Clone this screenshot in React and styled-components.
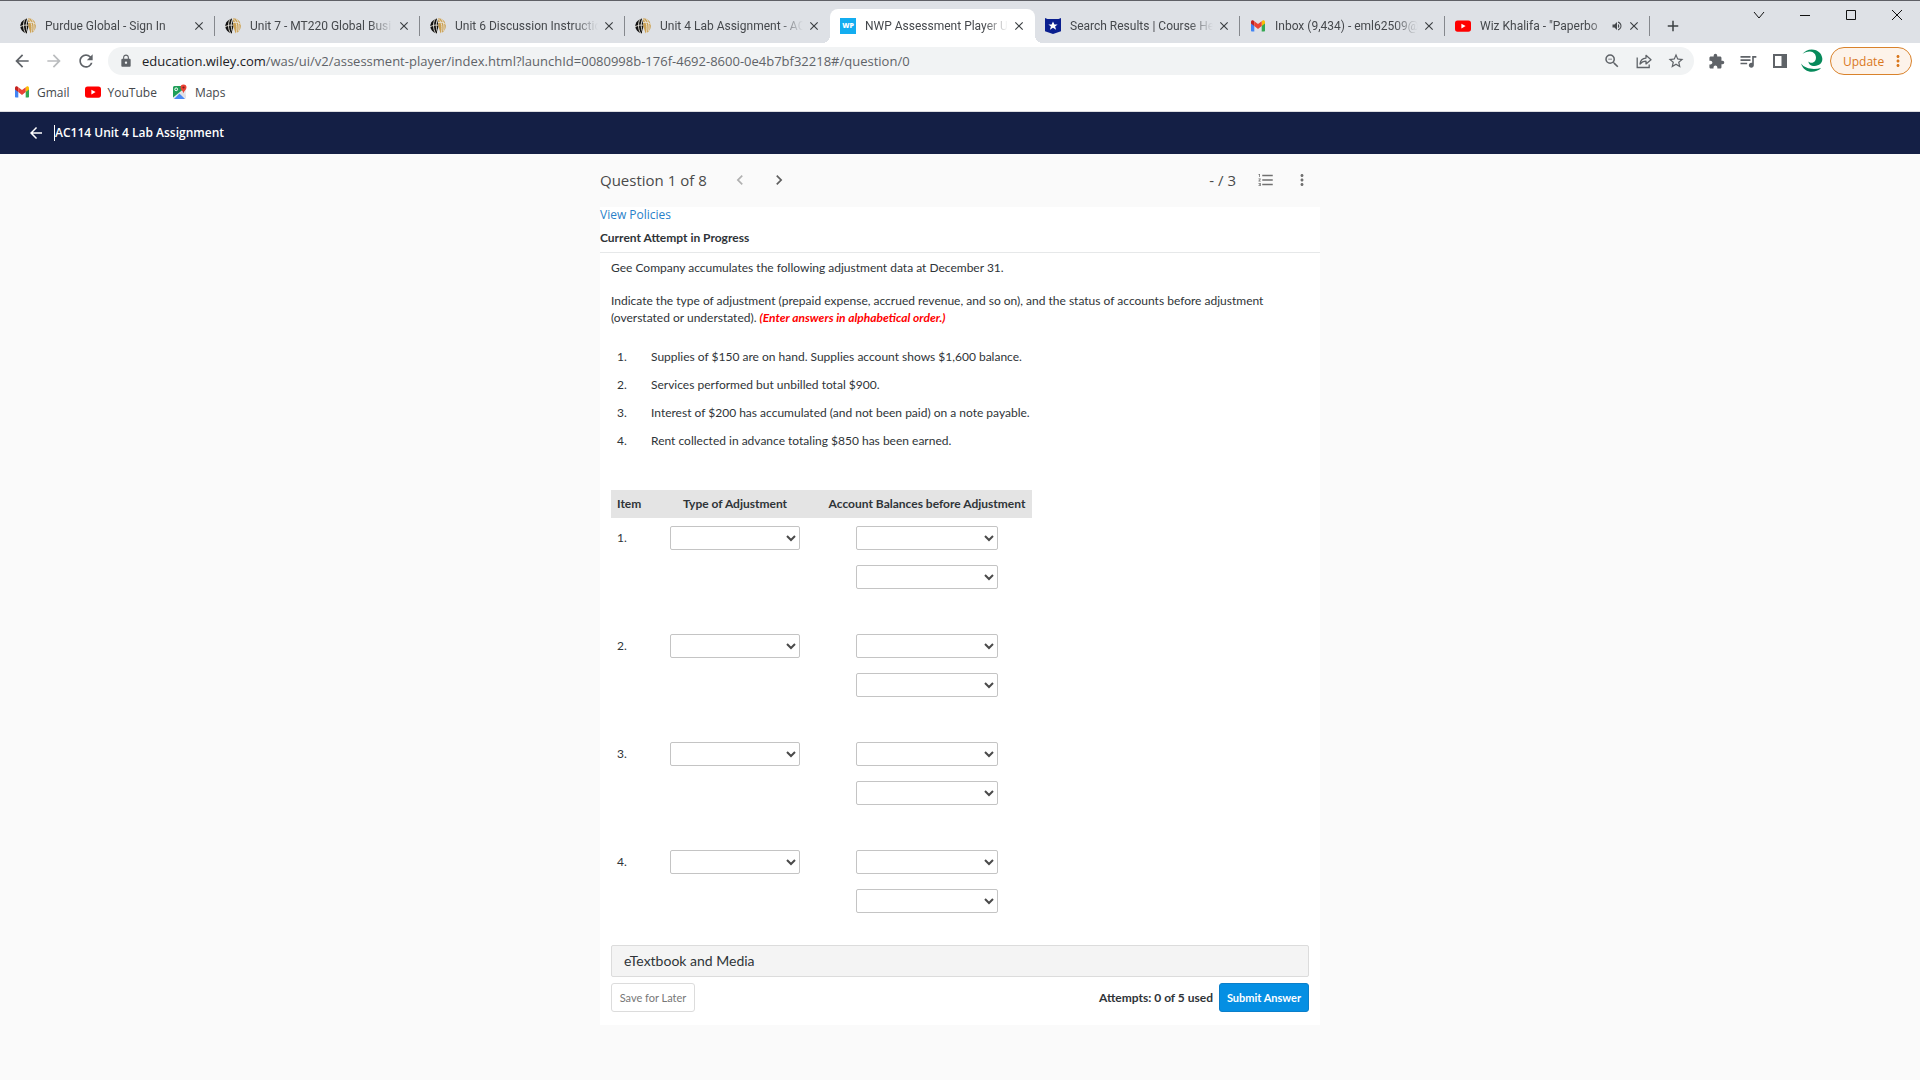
import React from 'react'
import styled, { createGlobalStyle } from 'styled-components'
import {
  MdAdd,
  MdArrowBack,
  MdArrowForward,
  MdChevronLeft,
  MdChevronRight,
  MdClose,
  MdExtension,
  MdFormatListNumbered,
  MdLock,
  MdMoreVert,
  MdQueueMusic,
  MdRefresh,
  MdStarBorder,
  MdVolumeUp,
  MdZoomOut,
} from 'react-icons/md'

const tabs = [
  { title: 'Purdue Global - Sign In', icon: 'globe' },
  { title: 'Unit 7 - MT220 Global Busi', icon: 'globe' },
  { title: 'Unit 6 Discussion Instructio', icon: 'globe' },
  { title: 'Unit 4 Lab Assignment - AC', icon: 'globe', noLine: true },
  { title: 'NWP Assessment Player UI', icon: 'wiley', active: true, noLine: true },
  { title: 'Search Results | Course He', icon: 'shield' },
  { title: 'Inbox (9,434) - eml62509@', icon: 'gmail' },
  { title: 'Wiz Khalifa - "Paperbo', icon: 'youtube', audio: true },
]

const facts = [
  'Supplies of $150 are on hand. Supplies account shows $1,600 balance.',
  'Services performed but unbilled total $900.',
  'Interest of $200 has accumulated (and not been paid) on a note payable.',
  'Rent collected in advance totaling $850 has been earned.',
]

const GlobeIcon = () => (
  <svg width="16" height="16" viewBox="0 0 16 16">
    <path d="M7 0.6C3.2 1.6 0.4 4.6 0.3 8c0 3.4 2.6 6.5 6.5 7.6L8.5 8z" fill="#111" />
    <path d="M8 0.3C12.4 0.2 15.8 3.6 15.8 8c0 3.4-2.2 6.3-5.3 7.3L8.3 8z" fill="#cba052" />
    <path
      d="M5.2 1C2.8 4.8 3 11 5.6 15.2M8 0C5.4 5 5.8 11.5 8.6 16M0 8.8c3-1.6 5.4-2 8-1.6M8 4.6c3-.8 5.5-.2 8 1.7M8.5 1c3.6 3.4 4 9.2 2.8 14M11.5 1c2.6 3.8 3 8 2.2 12"
      fill="none"
      stroke="#e9e5dc"
      strokeWidth="0.9"
    />
  </svg>
)

const GmailIcon = () => (
  <svg width="16" height="16" viewBox="0 0 16 16">
    <path d="M1 4v8.5c0 .6.5 1 1 1h2.3V7.2z" fill="#4285f4" />
    <path d="M15 4v8.5c0 .6-.5 1-1 1h-2.3V7.2z" fill="#34a853" />
    <path d="M1 5.6V4c0-1.4 1.5-2.1 2.6-1.3l.7.5v4.9z" fill="#c5221f" />
    <path d="M15 5.6V4c0-1.4-1.5-2.1-2.6-1.3l-.7.5v4.9z" fill="#fbbc04" />
    <path d="M4.3 3.2L8 6l3.7-2.8v4.9L8 10.9 4.3 8.1z" fill="#ea4335" />
  </svg>
)

const YoutubeIcon = () => (
  <svg width="16" height="16" viewBox="0 0 16 16">
    <rect y="2.5" width="16" height="11.2" rx="2.6" fill="#f00" />
    <path d="M6.4 5.7v4.8l4.2-2.4z" fill="#fff" />
  </svg>
)

const MapsIcon = () => (
  <svg width="16" height="16" viewBox="0 0 16 16">
    <rect x="1" y="2" width="13" height="13" rx="1.5" fill="#e8eaed" />
    <path d="M1 13.5V3.5A1.5 1.5 0 0 1 2.5 2H11v3.5z" fill="#1e9e58" />
    <path d="M2 15l5.5-5.5L13 15z" fill="#4a89f3" />
    <path d="M7.5 9.5L10 7l4 4.5V14z" fill="#dfe1e5" />
    <circle cx="4.2" cy="5.3" r="1.4" fill="none" stroke="#fff" />
    <path d="M11.5 0.5A3 3 0 0 0 8.5 3.5c0 2.3 2.4 3.2 3 5.7.6-2.5 3-3.4 3-5.7A3 3 0 0 0 11.5 0.5z" fill="#ea4335" />
    <circle cx="11.5" cy="3.5" r="1.1" fill="#7b231e" />
  </svg>
)

const ShieldIcon = () => (
  <svg width="16" height="16" viewBox="0 0 16 16">
    <path d="M0 0l2.5 1h11L16 0v13.2L8 16l-8-2.8z" fill="#0a1f8f" />
    <path d="M8 3.4l1.4 3h3.2L10.1 8.5l1 3.2L8 9.8l-3.1 1.9 1-3.2L3.4 6.4h3.2z" fill="#fff" />
  </svg>
)

const ShareIcon = () => (
  <svg width="16" height="16" viewBox="0 0 16 16" fill="none" stroke="#5f6368" strokeWidth="1.3">
    <path d="M1.2 4.5v10h12v-3" />
    <path d="M4 11c.4-3.8 2.6-5.7 6-5.9V2.3L15 6.7l-5 4.2V8.2C7.4 8.2 5.6 9 4 11z" strokeLinejoin="round" />
  </svg>
)

const PanelIcon = () => (
  <svg width="14" height="14" viewBox="0 0 14 14">
    <path d="M0 0h14v14H0zM2 2v10h6.5V2z" fill="#5f6368" fillRule="evenodd" />
  </svg>
)

const AvatarIcon = () => (
  <svg width="24" height="24" viewBox="0 0 24 24" fill="#078a5b">
    <path d="M2.500 5C6-.3 15-1.500 20 4c5 6.500 1.500 13-5.500 13-4 0-6-2-6-4.500 1.500 1.800 5 1.800 6.500-.5C17.500 8 15 2.700 10 2.500 7 2.400 4.500 3.300 2.500 5z" />
    <path d="M1 14.500c4 5.300 12 6.500 20.200 4.500-6 5.700-17 5.700-20.200-4.500z" />
  </svg>
)

const WindowIcon = ({ d }) => (
  <svg width="12" height="12" viewBox="0 0 12 12" fill="none" stroke="#111">
    <path d={d} />
  </svg>
)

const favicons = {
  globe: <GlobeIcon />,
  shield: <ShieldIcon />,
  gmail: <GmailIcon />,
  youtube: <YoutubeIcon />,
}

const windowButtons = [
  { label: 'Search tabs', d: 'M1 3l5 6 5-6' },
  { label: 'Minimize', d: 'M1 6.5h10' },
  { label: 'Maximize', d: 'M1.5 1.5h9v9h-9z' },
  { label: 'Close window', d: 'M1 1l10 10M11 1L1 11' },
]

const TabStrip = () => (
  <Strip>
    <Tabs>
      {tabs.map((tab) => (
        <Tab key={tab.title} $active={tab.active} $noLine={tab.noLine}>
          {tab.icon === 'wiley' ? <WileyMark>WP</WileyMark> : favicons[tab.icon]}
          <TabTitle>{tab.title}</TabTitle>
          {tab.audio && <MdVolumeUp size={12} />}
          <TabClose aria-label={`Close ${tab.title}`}>
            <MdClose size={14} />
          </TabClose>
        </Tab>
      ))}
      <NewTab aria-label="New tab">
        <MdAdd size={18} />
      </NewTab>
    </Tabs>
    <WindowControls>
      {windowButtons.map((b) => (
        <WindowButton key={b.label} aria-label={b.label}>
          <WindowIcon d={b.d} />
        </WindowButton>
      ))}
    </WindowControls>
  </Strip>
)

const Toolbar = () => (
  <Bar>
    <IconButton aria-label="Back"><MdArrowBack size={20} /></IconButton>
    <IconButton aria-label="Forward" $dim><MdArrowForward size={20} /></IconButton>
    <IconButton aria-label="Reload"><MdRefresh size={20} /></IconButton>
    <Omnibox>
      <MdLock size={14} />
      <Url>
        <b>education.wiley.com</b>/was/ui/v2/assessment-player/index.html?launchId=0080998b-176f-4692-8600-0e4b7bf32218#/question/0
      </Url>
      <IconButton aria-label="Zoom"><MdZoomOut size={18} /></IconButton>
      <IconButton aria-label="Share"><ShareIcon /></IconButton>
      <IconButton aria-label="Bookmark"><MdStarBorder size={18} /></IconButton>
    </Omnibox>
    <IconButton aria-label="Extensions"><MdExtension size={17} /></IconButton>
    <IconButton aria-label="Media"><MdQueueMusic size={20} /></IconButton>
    <IconButton aria-label="Side panel"><PanelIcon /></IconButton>
    <IconButton aria-label="Profile"><AvatarIcon /></IconButton>
    <UpdateButton>
      Update
      <MdMoreVert size={18} />
    </UpdateButton>
  </Bar>
)

const Bookmarks = () => (
  <BookmarkBar>
    <Bookmark href="#"><GmailIcon />Gmail</Bookmark>
    <Bookmark href="#"><YoutubeIcon />YouTube</Bookmark>
    <Bookmark href="#"><MapsIcon />Maps</Bookmark>
  </BookmarkBar>
)

const AnswerTable = () => (
  <Table>
    <thead>
      <tr>
        <Th $width={47} $left>Item</Th>
        <Th $width={154}>Type of Adjustment</Th>
        <Th $width={220}>Account Balances before Adjustment</Th>
      </tr>
    </thead>
    <tbody>
      {facts.map((fact, i) => (
        <tr key={fact}>
          <Td $left>{i + 1}.</Td>
          <Td>
            <Select $width={130} aria-label={`Item ${i + 1} type of adjustment`} />
          </Td>
          <Td>
            <SelectStack>
              <Select $width={142} aria-label={`Item ${i + 1} first account balance`} />
              <Select $width={142} aria-label={`Item ${i + 1} second account balance`} />
            </SelectStack>
          </Td>
        </tr>
      ))}
    </tbody>
  </Table>
)

const Question = () => (
  <>
    <QuestionBar>
      <QuestionTitle>Question 1 of 8</QuestionTitle>
      <NavButton aria-label="Previous question" $dim><MdChevronLeft size={20} /></NavButton>
      <NavButton aria-label="Next question"><MdChevronRight size={20} /></NavButton>
      <Score>- / 3</Score>
      <ToolButton aria-label="Question list"><MdFormatListNumbered size={18} /></ToolButton>
      <ToolButton aria-label="More options"><MdMoreVert size={18} /></ToolButton>
    </QuestionBar>
    <Card>
      <Attempt>
        <PolicyLink href="#">View Policies</PolicyLink>
        <AttemptTitle>Current Attempt in Progress</AttemptTitle>
      </Attempt>
      <Body>
        <p>Gee Company accumulates the following adjustment data at December 31.</p>
        <p>
          Indicate the type of adjustment (prepaid expense, accrued revenue, and so on), and the status of accounts before
          adjustment (overstated or understated). <Hint>(Enter answers in alphabetical order.)</Hint>
        </p>
        <Facts>
          {facts.map((fact, i) => (
            <li key={fact}>
              <span>{i + 1}.</span>
              {fact}
            </li>
          ))}
        </Facts>
        <AnswerTable />
        <MediaButton>eTextbook and Media</MediaButton>
        <Actions>
          <SaveButton>Save for Later</SaveButton>
          <Attempts>Attempts: 0 of 5 used</Attempts>
          <SubmitButton>Submit Answer</SubmitButton>
        </Actions>
      </Body>
    </Card>
  </>
)

const App = () => (
  <>
    <GlobalStyle />
    <TabStrip />
    <Toolbar />
    <Bookmarks />
    <Header>
      <MdArrowBack size={18} />
      <HeaderTitle>AC114 Unit 4 Lab Assignment</HeaderTitle>
    </Header>
    <Main>
      <Question />
    </Main>
  </>
)
export default App

const GlobalStyle = createGlobalStyle`
  * {
    box-sizing: border-box;
  }
  body {
    margin: 0;
    background: #fafafa;
    font-family: 'Open Sans', 'Noto Sans', sans-serif;
    font-size: 12px;
  }
  button {
    padding: 0;
    border: 0;
    background: none;
    font-family: inherit;
    font-size: inherit;
    color: inherit;
  }
  svg {
    flex: none;
  }
`

const Strip = styled.div`
  display: flex;
  justify-content: space-between;
  height: 43px;
  border-top: 1px solid #5f6066;
  background: #dee1e6;
`

const Tabs = styled.div`
  display: flex;
  flex: 1;
  min-width: 0;
  padding: 8px 0 0 10px;
`

const Tab = styled.div`
  display: flex;
  align-items: center;
  flex: 0 1 205px;
  min-width: 0;
  padding: 0 9px 0 10px;
  position: relative;
  color: #45484c;
  background: ${(props) => (props.$active ? '#fff' : 'transparent')};
  border-radius: 8px 8px 0 0;
  &::after {
    content: '';
    position: absolute;
    right: 0;
    top: 7px;
    width: 1px;
    height: 20px;
    background: ${(props) => (props.$noLine ? 'transparent' : '#85888d')};
  }
  ${(props) =>
    props.$active &&
    `
    &::before {
      content: '';
      position: absolute;
      left: -8px;
      right: -8px;
      bottom: 0;
      height: 8px;
      background:
        radial-gradient(circle at 0 0, transparent 8px, #fff 8px) left / 8px 8px no-repeat,
        radial-gradient(circle at 100% 0, transparent 8px, #fff 8px) right / 8px 8px no-repeat;
    }
  `}
`

const TabTitle = styled.span`
  flex: 1;
  min-width: 0;
  margin: 0 0 0 9px;
  overflow: hidden;
  font-family: Roboto, 'Open Sans', sans-serif;
  white-space: nowrap;
  mask-image: linear-gradient(to right, #000 calc(100% - 24px), transparent);
`

const TabClose = styled.button`
  display: flex;
  margin-left: 4px;
  color: #3c4043;
  stroke: currentColor;
`

const WileyMark = styled.span`
  flex: none;
  width: 16px;
  background: #13adf0;
  color: #fff;
  font-size: 7px;
  font-weight: 800;
  line-height: 16px;
  text-align: center;
`

const NewTab = styled.button`
  display: flex;
  align-items: center;
  padding: 0 14px;
  color: #3c4043;
  stroke: currentColor;
`

const WindowControls = styled.div`
  display: flex;
`

const WindowButton = styled.button`
  display: flex;
  align-items: center;
  justify-content: center;
  width: 46px;
  height: 28px;
`

const Bar = styled.div`
  display: flex;
  align-items: center;
  padding: 4px 8px 4px 6px;
  background: #fff;
`

const IconButton = styled.button`
  display: flex;
  align-items: center;
  justify-content: center;
  width: 32px;
  height: 28px;
  color: ${(props) => (props.$dim ? '#babcbe' : '#5f6368')};
`

const Omnibox = styled.div`
  display: flex;
  align-items: center;
  flex: 1;
  min-width: 0;
  height: 28px;
  margin: 0 6px;
  padding: 0 2px 0 11px;
  border-radius: 14px;
  background: #f1f3f4;
  color: #5f6368;
`

const Url = styled.div`
  flex: 1;
  min-width: 0;
  overflow: hidden;
  margin-left: 9px;
  font-size: 13px;
  white-space: nowrap;
  b {
    color: #202124;
    font-weight: 400;
  }
`

const UpdateButton = styled.button`
  display: flex;
  align-items: center;
  justify-content: space-between;
  width: 82px;
  height: 28px;
  margin-left: 2px;
  padding: 0 4px 0 12px;
  border: 1px solid #d9822b;
  border-radius: 14px;
  background: #fdf3ea;
  color: #d9771c;
`

const BookmarkBar = styled.div`
  display: flex;
  align-items: center;
  gap: 15px;
  height: 33px;
  padding: 0 14px 6px;
  border-bottom: 1px solid #dcdde0;
  background: #fff;
`

const Bookmark = styled.a`
  display: flex;
  align-items: center;
  gap: 7px;
  color: #45484c;
  text-decoration: none;
`

const Header = styled.header`
  display: flex;
  align-items: center;
  gap: 9px;
  height: 42px;
  padding: 0 27px;
  background: #141f45;
  color: #fff;
`

const HeaderTitle = styled.h1`
  margin: 0;
  border-left: 1px solid #fff;
  font-size: 12px;
  font-weight: 600;
  line-height: 16px;
`

const Main = styled.main`
  max-width: 720px;
  margin: 0 auto;
  color: #2f3438;
`

const QuestionBar = styled.div`
  display: flex;
  align-items: center;
  height: 53px;
  padding-bottom: 2px;
  color: #4a4a4a;
  font-size: 15px;
`

const QuestionTitle = styled.h2`
  margin: 0 14px 0 0;
  font-size: 15px;
  font-weight: 400;
`

const NavButton = styled.button`
  display: flex;
  justify-content: center;
  width: 39px;
  color: ${(props) => (props.$dim ? '#b0b0b0' : '#606060')};
`

const Score = styled.span`
  margin-left: auto;
  margin-right: 12px;
`

const ToolButton = styled.button`
  display: flex;
  justify-content: center;
  width: 36px;
  color: #707070;
`

const Card = styled.section`
  background: #fff;
  font-family: Lato, 'Open Sans', sans-serif;
`

const Attempt = styled.div`
  height: 46px;
  border-bottom: 1px solid #e6e8e9;
`

const PolicyLink = styled.a`
  display: block;
  color: #2a7fc9;
  font-family: 'Open Sans', sans-serif;
  line-height: 16px;
  text-decoration: none;
`

const AttemptTitle = styled.h3`
  margin: 6px 0 0;
  font-size: 12px;
  font-weight: 700;
  line-height: 17px;
`

const Body = styled.div`
  padding: 6px 11px 13px;
  line-height: 17px;
  p {
    margin: 0 0 16px;
  }
`

const Hint = styled.em`
  color: #f00;
  font-weight: 700;
`

const Facts = styled.ol`
  margin: 17px 0 35px;
  padding: 0 0 0 6px;
  list-style: none;
  li {
    display: flex;
    line-height: 28px;
  }
  span {
    width: 34px;
  }
`

const Table = styled.table`
  border-collapse: collapse;
  tbody tr:last-child td {
    height: 103px;
  }
`

const Th = styled.th`
  width: ${(props) => props.$width}px;
  height: 28px;
  padding: 0 ${(props) => (props.$left ? 6 : 5)}px 2px;
  background: #e4e4e4;
  text-align: ${(props) => (props.$left ? 'left' : 'center')};
  white-space: nowrap;
  &:last-child {
    padding-left: 15px;
  }
`

const Td = styled.td`
  height: 108px;
  padding: ${(props) => (props.$left ? '11px 6px' : '8px 0 0 12px')};
  vertical-align: top;
`

const Select = styled.select`
  display: block;
  width: ${(props) => props.$width}px;
  height: 24px;
  border: 1px solid #c4c4c4;
  border-radius: 2px;
  background: #fff;
  color: #4a4a4a;
`

const SelectStack = styled.div`
  display: flex;
  flex-direction: column;
  align-items: center;
  gap: 15px;
  padding-right: 2px;
`

const MediaButton = styled.button`
  width: 100%;
  height: 32px;
  padding: 0 12px 2px;
  border: 1px solid #dcdcdc;
  border-radius: 2px;
  background: #f4f4f4;
  font-size: 14px;
  text-align: left;
`

const Actions = styled.div`
  display: flex;
  align-items: center;
  margin-top: 6px;
`

const SaveButton = styled.button`
  width: 84px;
  height: 29px;
  padding-bottom: 1px;
  border: 1px solid #dcdcdc;
  border-radius: 3px;
  background: #fff;
  color: #777;
  font-size: 11px;
`

const Attempts = styled.span`
  margin: 0 6px 0 auto;
  padding-bottom: 1px;
  font-weight: 700;
`

const SubmitButton = styled.button`
  width: 90px;
  height: 29px;
  padding-bottom: 1px;
  border: 1px solid #0b7fca;
  border-radius: 3px;
  background: #058fe3;
  color: #fff;
  font-size: 11px;
  font-weight: 700;
`
